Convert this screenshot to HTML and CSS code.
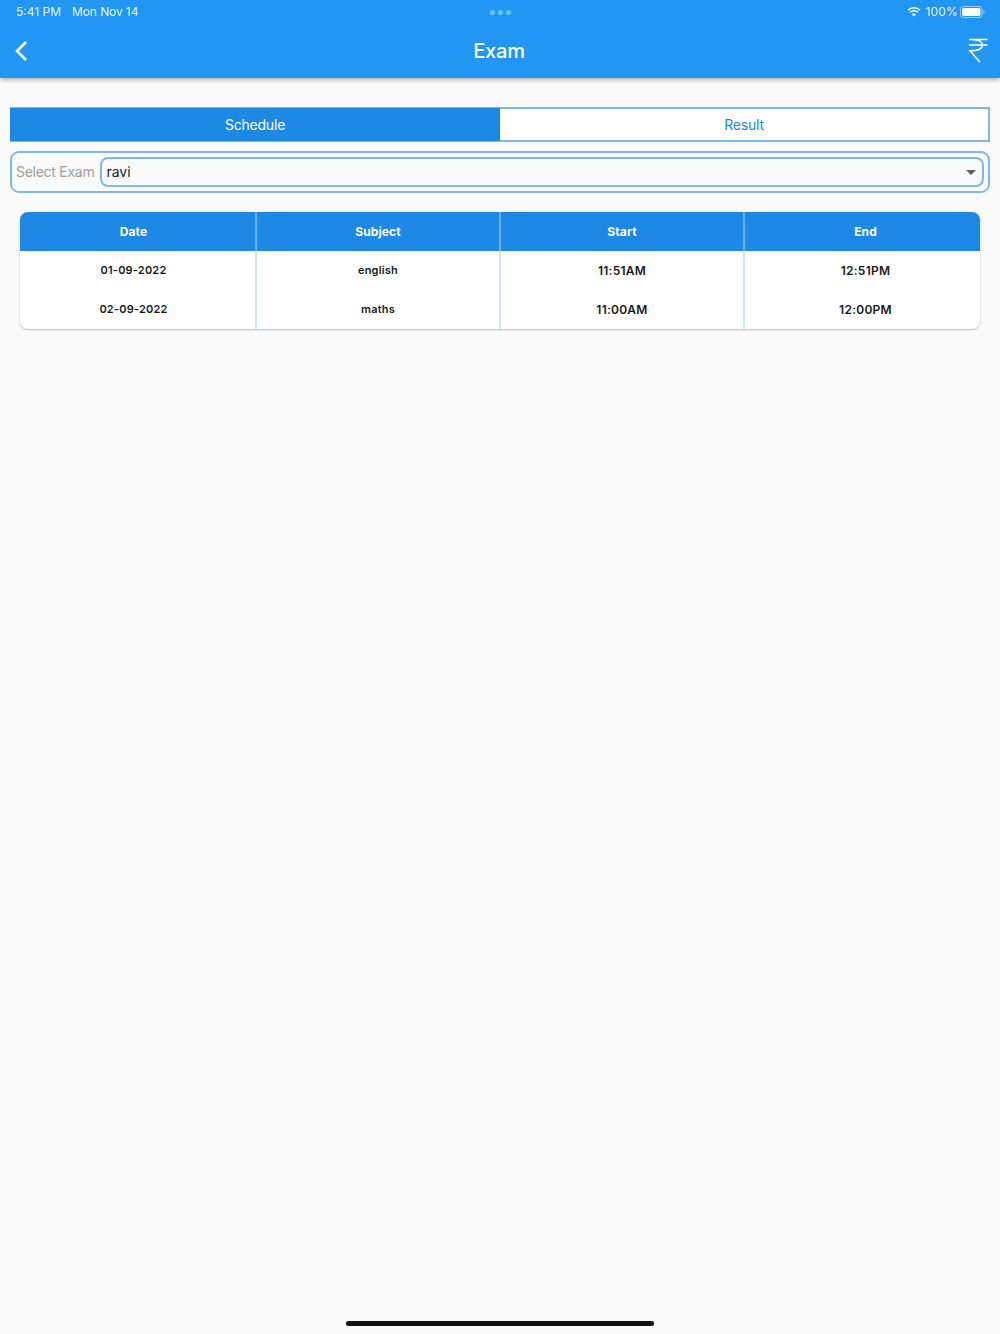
FILE: index.html
```html
<!DOCTYPE html>
<html lang="en">
<head>
<meta charset="utf-8">
<title>Exam</title>
<link rel="stylesheet" href="styles.css">
</head>
<body>
<div class="page">
  <header class="appbar">
    <div class="status">
      <div class="status-left"><span>5:41 PM</span><span>Mon Nov 14</span></div>
      <div class="dots"><i></i><i></i><i></i></div>
      <div class="status-right">
        <svg class="wifi" width="14" height="11" viewBox="0 0 14 11"><path d="M7 10.600 4.900 8.400a3 3 0 0 1 4.200 0Z" fill="#fff"/><path d="M1 4.300a8.600 8.600 0 0 1 12 0M3 6.300a5.800 5.800 0 0 1 8 0" fill="none" stroke="#fff" stroke-width="1.500"/></svg>
        <span class="pct">100%</span>
        <svg class="battery" width="25" height="12" viewBox="0 0 25 12"><rect x=".5" y=".5" width="21.500" height="11" rx="3" fill="none" stroke="#fff" stroke-opacity=".5"/><rect x="2" y="2" width="18.500" height="8" rx="1.700" fill="#fff"/><path d="M23.300 4v4c.7-.3 1.200-1.100 1.200-2s-.5-1.700-1.200-2Z" fill="#fff" fill-opacity=".5"/></svg>
      </div>
    </div>
    <div class="toolbar">
      <svg class="back" width="14" height="22" viewBox="0 0 14 22"><path d="M12 2 3 11l9 9" fill="none" stroke="#fff" stroke-width="2.600"/></svg>
      <h1>Exam</h1>
      <svg class="rupee" width="20" height="26" viewBox="0 0 20 26"><path d="M1 1.500h18.500M1 7h18.500M4.500 1.700c5 0 9.800.4 9.800 5.300 0 4.500-4.500 5.800-12.300 5.800l10 11.500" fill="none" stroke="#fff" stroke-width="1.600"/></svg>
    </div>
  </header>
  <main class="content">
    <div class="tabs">
      <div class="tab active">Schedule</div>
      <div class="tab">Result</div>
    </div>
    <div class="select-row">
      <span class="select-label">Select Exam</span>
      <div class="select-box">
        <span>ravi</span>
        <svg width="10" height="5" viewBox="0 0 10 5"><path d="M0 0h10L5 5Z" fill="#616161"/></svg>
      </div>
    </div>
    <div class="table">
      <div class="row head">
        <div>Date</div><div>Subject</div><div>Start</div><div>End</div>
      </div>
      <div class="row">
        <div class="small">01-09-2022</div><div class="small">english</div><div class="time">11:51AM</div><div class="time">12:51PM</div>
      </div>
      <div class="row">
        <div class="small">02-09-2022</div><div class="small">maths</div><div class="time">11:00AM</div><div class="time">12:00PM</div>
      </div>
    </div>
  </main>
  <div class="home-indicator"></div>
</div>
</body>
</html>
```
FILE: styles.css
```css
* { box-sizing: border-box; }
html, body { margin: 0; padding: 0; }
body { font-family: Inter, "Liberation Sans", sans-serif; background: #fafafa; }
.page { width: 1000px; height: 1334px; display: flex; flex-direction: column; position: relative; overflow: hidden; }
.appbar { height: 78px; background: #2196f3; box-shadow: 0 2px 4px rgba(0,0,0,.3); color: #fff; flex: none; }
.status { height: 23px; padding: 0 15px 0 16px; display: flex; align-items: center; justify-content: space-between; font-size: 12px; color: rgba(255,255,255,.92); }
.status-left { display: flex; gap: 11px; width: 300px; }
.status-left span:last-child { letter-spacing: -.1px; }
.dots { display: flex; gap: 3px; margin-top: 1px; }
.dots i { width: 5px; height: 5px; border-radius: 50%; background: #62c8fb; }
.status-right { display: flex; align-items: center; justify-content: flex-end; gap: 4px; width: 300px; letter-spacing: .2px; }
.pct { margin-right: -2px; }
.toolbar { height: 55px; padding: 0 12px; display: grid; grid-template-columns: 1fr auto 1fr; align-items: center; }
.toolbar h1 { margin: 0; padding-right: 2px; font-size: 20px; font-weight: 500; letter-spacing: -.15px; }
.back { margin-left: 2px; }
.rupee { justify-self: end; }
.content { padding: 29px 10px 0; flex: 1; }
.tabs { display: grid; grid-template-columns: 1fr 1fr; height: 35px; border: 2px solid #7db9f0; }
.tab { display: flex; align-items: center; justify-content: center; font-size: 14px; letter-spacing: -.2px; background: #fff; color: #1e88e5; padding-bottom: 1px; }
.tab.active { background: #1e88e5; color: #fff; margin: -1px 0 -1px -2px; }
.select-row { margin-top: 9px; height: 42px; border: 2px solid #7db9f0; border-radius: 9px; padding: 0 4px; display: flex; align-items: center; gap: 6px; }
.select-label { font-size: 14px; letter-spacing: -.27px; color: #9e9e9e; white-space: nowrap; padding-bottom: 2px; }
.select-box { flex: 1; height: 30px; border: 2px solid #7db9f0; border-radius: 8px; padding: 0 6px 0 4px; display: flex; align-items: center; justify-content: space-between; font-size: 14px; color: #212121; }
.select-box span { padding-bottom: 2px; }
.table { margin: 19px 10px 0; background: #fff; border-radius: 8px; box-shadow: 0 1px 2px rgba(0,0,0,.25); overflow: hidden; }
.row { display: grid; grid-template-columns: 235px 244px 244px 237px; height: 39px; font-size: 11px; font-weight: 600; color: #1a1a1a; letter-spacing: .2px; }
.row > div { display: flex; align-items: center; justify-content: center; }
.row > div + div { border-left: 2px solid #cfe4fa; }
.row > div:nth-child(1) { padding-right: 8px; }
.row > div:nth-child(4) { padding-left: 6px; }
.head { background: #1e88e5; color: #fff; font-size: 12px; font-weight: 700; letter-spacing: .1px; }
.head > div + div { border-left-color: #6cb0ee; }
.time { font-size: 12px; letter-spacing: .25px; }
.row > .small { font-size: 11px; padding-bottom: 2px; }
.home-indicator { position: absolute; left: 346px; bottom: 8px; width: 308px; height: 5px; border-radius: 3px; background: #111; }
```
